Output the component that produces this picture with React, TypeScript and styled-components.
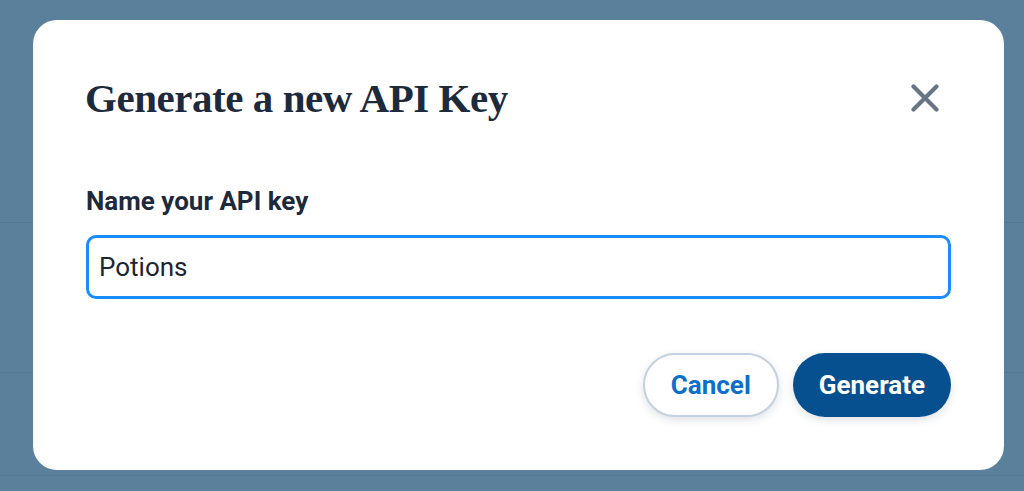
import styled, { createGlobalStyle } from 'styled-components'

const GlobalStyle = createGlobalStyle`
  html, body {
    margin: 0;
    padding: 0;
    height: 100%;
  }

  body {
    background: #5b809c;
    font-family: Roboto, 'Liberation Sans', sans-serif;
  }

  #root {
    height: 100%;
  }
`

const Backdrop = styled.div`
  position: relative;
  width: 1024px;
  height: 491px;
  overflow: hidden;
  background: #5b809c;
  padding: 20px 20px 0 33px;
  box-sizing: border-box;
`

// faint table rows of the page behind the overlay
const RuleLine = styled.div<{ $top: number }>`
  position: absolute;
  left: 0;
  right: 0;
  top: ${(p) => p.$top}px;
  height: 1px;
  background: #537797;
`

const Dialog = styled.section`
  position: relative;
  display: flex;
  flex-direction: column;
  box-sizing: border-box;
  width: 971px;
  height: 450px;
  padding: 54px 53px 53px;
  background: #ffffff;
  border-radius: 24px;
`

const Header = styled.header`
  display: flex;
  align-items: center;
  justify-content: space-between;
  height: 48px;
`

const Title = styled.h2`
  margin: 0 0 0 -1px;
  font-family: 'Liberation Serif', 'Times New Roman', serif;
  font-weight: 700;
  font-size: 41px;
  line-height: 48px;
  letter-spacing: -0.45px;
  color: #1d2a3b;
`

const CloseButton = styled.button`
  display: flex;
  align-items: center;
  justify-content: center;
  width: 28px;
  height: 28px;
  margin-right: 12px;
  padding: 0;
  border: none;
  background: none;
  color: #677585;
  cursor: pointer;
`

const Label = styled.label`
  display: block;
  margin-top: 65px;
  font-weight: 700;
  font-size: 26px;
  line-height: 28px;
  color: #1d2a3b;
`

const Input = styled.input`
  box-sizing: border-box;
  width: 100%;
  height: 64px;
  margin-top: 20px;
  padding: 0 10px;
  border: 3px solid #1a8cff;
  border-radius: 10px;
  outline: none;
  font-family: Roboto, 'Liberation Sans', sans-serif;
  font-size: 26px;
  color: #1c2530;
  background: #ffffff;
`

const Actions = styled.div`
  display: flex;
  justify-content: flex-end;
  gap: 14px;
  margin-top: 54px;
`

const Button = styled.button<{ $primary?: boolean }>`
  box-sizing: border-box;
  height: 64px;
  padding: 0 26px;
  border-radius: 32px;
  border: ${(p) => (p.$primary ? 'none' : '2px solid #c3d1e2')};
  background: ${(p) => (p.$primary ? '#06508f' : '#ffffff')};
  color: ${(p) => (p.$primary ? '#ffffff' : '#0b6fcb')};
  font-family: Roboto, 'Liberation Sans', sans-serif;
  font-weight: 700;
  font-size: 26px;
  box-shadow: 0 3px 8px rgba(20, 40, 70, 0.14);
  cursor: pointer;
`

export default function App() {
  return (
    <>
      <GlobalStyle />
      <Backdrop>
        <RuleLine $top={222} />
        <RuleLine $top={372} />
        <RuleLine $top={475} />
        <Dialog role="dialog" aria-labelledby="api-key-title">
          <Header>
            <Title id="api-key-title">Generate a new API Key</Title>
            <CloseButton aria-label="Close">
              <svg width="28" height="28" viewBox="0 0 28 28" fill="none">
                <path
                  d="M2.5 2.5L25.5 25.5M25.5 2.5L2.5 25.5"
                  stroke="currentColor"
                  strokeWidth="4.2"
                  strokeLinecap="round"
                />
              </svg>
            </CloseButton>
          </Header>
          <Label htmlFor="api-key-name">Name your API key</Label>
          <Input id="api-key-name" defaultValue="Potions" />
          <Actions>
            <Button>Cancel</Button>
            <Button $primary>Generate</Button>
          </Actions>
        </Dialog>
      </Backdrop>
    </>
  )
}
